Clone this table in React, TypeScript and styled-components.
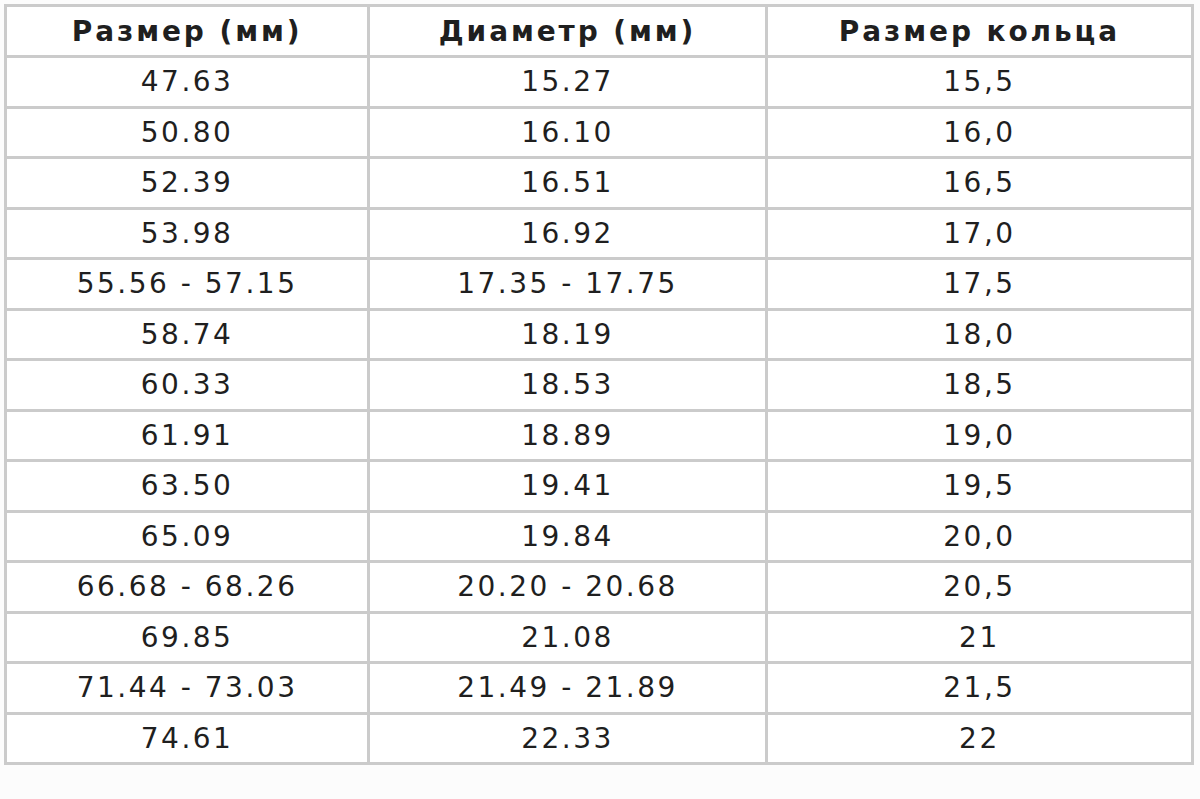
import React from 'react'
import styled, { createGlobalStyle } from 'styled-components'

const rows: Array<[string, string, string]> = [
  ['47.63', '15.27', '15,5'],
  ['50.80', '16.10', '16,0'],
  ['52.39', '16.51', '16,5'],
  ['53.98', '16.92', '17,0'],
  ['55.56 - 57.15', '17.35 - 17.75', '17,5'],
  ['58.74', '18.19', '18,0'],
  ['60.33', '18.53', '18,5'],
  ['61.91', '18.89', '19,0'],
  ['63.50', '19.41', '19,5'],
  ['65.09', '19.84', '20,0'],
  ['66.68 - 68.26', '20.20 - 20.68', '20,5'],
  ['69.85', '21.08', '21'],
  ['71.44 - 73.03', '21.49 - 21.89', '21,5'],
  ['74.61', '22.33', '22'],
]

const GlobalStyle = createGlobalStyle`
  html, body {
    margin: 0;
    background: #fcfcfc;
  }
  body {
    padding: 4px 0 0 4px;
    font-family: Verdana, "DejaVu Sans", sans-serif;
    color: #1f1f1f;
  }
`

const SizeTable = styled.table`
  width: 1190px;
  border-collapse: collapse;
  background: #fff;
  table-layout: fixed;
  border: 3px solid #cbcbcb;
`

const Col = styled.col<{ $w: string }>`
  width: ${p => p.$w};
`

const HeadCell = styled.th`
  height: 48px;
  padding: 0;
  border: 3px solid #cbcbcb;
  font-size: 28px;
  font-weight: bold;
  letter-spacing: 2.9px;
  text-align: center;
  vertical-align: middle;
`

const Cell = styled.td`
  height: 47.5px;
  padding: 0;
  border: 3px solid #cbcbcb;
  font-size: 28px;
  letter-spacing: 2.5px;
  text-align: center;
  vertical-align: middle;
`

const App = () => {
  return (
    <>
      <GlobalStyle />
      <SizeTable>
        <colgroup>
          <Col $w="30.6%" />
          <Col $w="33.5%" />
          <Col $w="35.9%" />
        </colgroup>
        <thead>
          <tr>
            <HeadCell>Размер (мм)</HeadCell>
            <HeadCell>Диаметр (мм)</HeadCell>
            <HeadCell>Размер кольца</HeadCell>
          </tr>
        </thead>
        <tbody>
          {rows.map((r, idx) => (
            <tr key={idx}>
              <Cell>{r[0]}</Cell>
              <Cell>{r[1]}</Cell>
              <Cell>{r[2]}</Cell>
            </tr>
          ))}
        </tbody>
      </SizeTable>
    </>
  )
}

export default App
